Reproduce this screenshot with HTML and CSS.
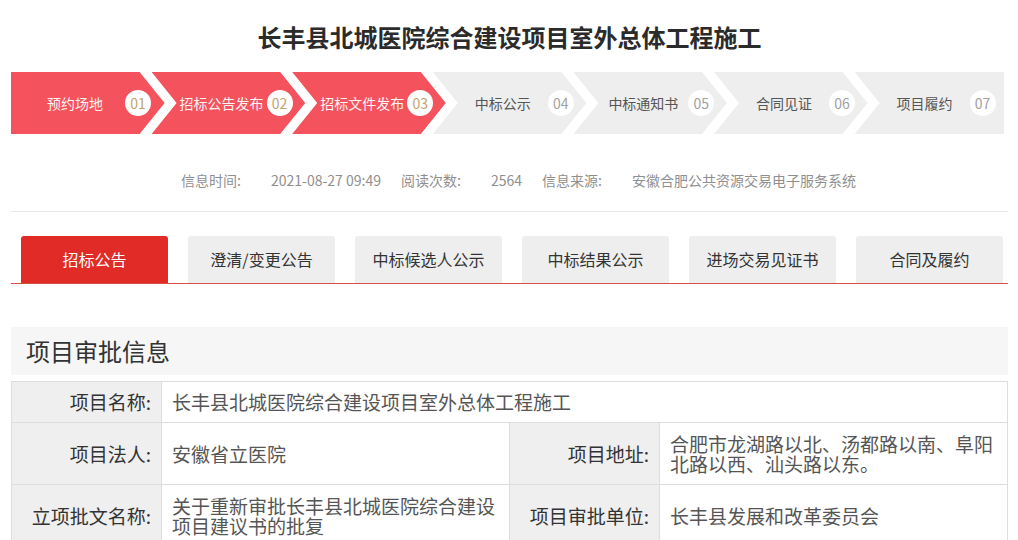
FILE: index.html
```html
<!DOCTYPE html>
<html lang="zh-CN">
<head>
<meta charset="utf-8">
<title>长丰县北城医院综合建设项目室外总体工程施工</title>
<link rel="stylesheet" href="styles.css">
</head>
<body>
<div class="page">
  <h1 class="title">长丰县北城医院综合建设项目室外总体工程施工</h1>

  <ol class="steps">
    <li class="step step-first active"><span class="step-name">预约场地</span><span class="badge">01</span></li>
    <li class="step active"><span class="step-name">招标公告发布</span><span class="badge">02</span></li>
    <li class="step active"><span class="step-name">招标文件发布</span><span class="badge">03</span></li>
    <li class="step"><span class="step-name">中标公示</span><span class="badge">04</span></li>
    <li class="step"><span class="step-name">中标通知书</span><span class="badge">05</span></li>
    <li class="step"><span class="step-name">合同见证</span><span class="badge">06</span></li>
    <li class="step step-last"><span class="step-name">项目履约</span><span class="badge">07</span></li>
  </ol>

  <div class="info">
    <span class="info-item"><span class="info-label">信息时间:</span><span class="info-value">2021-08-27 09:49</span></span>
    <span class="info-item"><span class="info-label">阅读次数:</span><span class="info-value">2564</span></span>
    <span class="info-item"><span class="info-label">信息来源:</span><span class="info-value">安徽合肥公共资源交易电子服务系统</span></span>
  </div>

  <ul class="tabs">
    <li class="tab tab-active">招标公告</li>
    <li class="tab">澄清/变更公告</li>
    <li class="tab">中标候选人公示</li>
    <li class="tab">中标结果公示</li>
    <li class="tab">进场交易见证书</li>
    <li class="tab">合同及履约</li>
  </ul>

  <h2 class="section-title">项目审批信息</h2>

  <table class="detail">
    <colgroup>
      <col class="col-label">
      <col class="col-value">
      <col class="col-label">
      <col class="col-value">
    </colgroup>
    <tr class="row-short">
      <th>项目名称:</th>
      <td colspan="3">长丰县北城医院综合建设项目室外总体工程施工</td>
    </tr>
    <tr class="row-tall">
      <th>项目法人:</th>
      <td>安徽省立医院</td>
      <th>项目地址:</th>
      <td>合肥市龙湖路以北、汤都路以南、阜阳北路以西、汕头路以东。</td>
    </tr>
    <tr class="row-tall">
      <th>立项批文名称:</th>
      <td>关于重新审批长丰县北城医院综合建设项目建议书的批复</td>
      <th>项目审批单位:</th>
      <td>长丰县发展和改革委员会</td>
    </tr>
  </table>
</div>
</body>
</html>
```

FILE: styles.css
```css
* {
  box-sizing: border-box;
}

html, body {
  margin: 0;
  padding: 0;
  background: #ffffff;
}

body {
  font-family: "Noto Sans CJK SC", "Microsoft YaHei", sans-serif;
  color: #333333;
}

.page {
  width: 1018px;
  padding: 0 10px 0 11px;
}

.title {
  margin: 0;
  height: 72px;
  line-height: 74px;
  text-align: center;
  font-size: 24px;
  font-weight: 700;
  color: #2b2b2b;
}

/* ---------- progress steps ---------- */
.steps {
  list-style: none;
  margin: 0 4px 0 0;
  padding: 0;
  display: flex;
  height: 62px;
}

.step {
  flex: 0 0 153.6px;
  margin-right: -13px;
  height: 62px;
  display: flex;
  align-items: center;
  padding-left: 25px;
  background: #eeeeee;
  color: #555555;
  font-size: 14px;
  clip-path: polygon(0 0, calc(100% - 25px) 0, 100% 50%, calc(100% - 25px) 100%, 0 100%, 25px 50%);
}

.step-first {
  padding-left: 14px;
  clip-path: polygon(0 0, calc(100% - 25px) 0, 100% 50%, calc(100% - 25px) 100%, 0 100%);
}

.step-first .step-name {
  flex-basis: 100px;
}

.step-last {
  flex: 1 1 auto;
  margin-right: 0;
  clip-path: polygon(0 0, 100% 0, 100% 100%, 0 100%, 25px 50%);
}

.step.active {
  background: #f4525c;
  color: #fff3f3;
}

.step-name {
  flex: 0 0 90px;
  text-align: center;
  white-space: nowrap;
}

.badge {
  flex: 0 0 26px;
  width: 26px;
  height: 26px;
  border-radius: 50%;
  background: #ffffff;
  color: #a0a0a0;
  font-size: 14px;
  line-height: 26px;
  text-align: center;
}

.step.active .badge {
  color: #c4a26c;
}

/* ---------- info line ---------- */
.info {
  display: flex;
  justify-content: center;
  gap: 20px;
  padding: 36px 0 21px 18px;
  line-height: 20px;
  font-size: 14px;
  color: #8f8f8f;
  border-bottom: 1px solid #e6e6e6;
}

.info-label {
  margin-right: 30px;
}

/* ---------- tabs ---------- */
.tabs {
  list-style: none;
  margin: 24px 0 0;
  padding: 0 0 0 10px;
  display: flex;
  gap: 20px;
  border-bottom: 1px solid #d6504a;
}

.tab {
  flex: 0 0 147px;
  height: 47px;
  line-height: 47px;
  text-align: center;
  font-size: 16px;
  color: #333333;
  background: #eeeeee;
  border-radius: 3px 3px 0 0;
}

.tab-active {
  background: #e02b26;
  color: #ffffff;
}

/* ---------- section ---------- */
.section-title {
  margin: 43px 0 0;
  height: 48px;
  line-height: 48px;
  padding-left: 15px;
  font-size: 24px;
  font-weight: 400;
  color: #333333;
  background: #f6f6f6;
}

/* ---------- detail table ---------- */
.detail {
  margin-top: 6px;
  width: 997px;
  border-collapse: collapse;
  table-layout: fixed;
  font-size: 19px;
}

.col-label {
  width: 150px;
}

.col-value {
  width: 348px;
}

.detail th,
.detail td {
  border: 1px solid #dddddd;
  line-height: 20px;
  vertical-align: middle;
}

.detail th {
  font-weight: 400;
  text-align: right;
  color: #333333;
  background: #efefef;
  padding: 0 10px 0 0;
  white-space: nowrap;
}

.detail td {
  text-align: left;
  color: #555555;
  padding: 0 9px 0 10px;
}

.row-short {
  height: 41px;
}

.row-tall {
  height: 62px;
}
```
